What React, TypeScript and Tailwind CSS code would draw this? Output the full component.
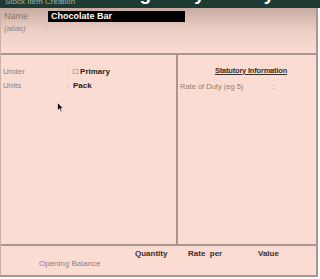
import React from "react";

const Cursor = () => (
  <svg width="7" height="11" viewBox="0 0 7 11" className="absolute left-[56px] top-[47px]">
    <path d="M0.5 0.5 L0.5 8.5 L2.5 6.8 L4 10 L5.2 9.4 L3.8 6.3 L6.2 6.3 Z" fill="#111" stroke="#fff" strokeWidth="0.6" />
  </svg>
);

const App = () => {
  return (
    <div className="w-[320px] h-[279px] bg-white overflow-hidden font-['Liberation_Sans',Arial,sans-serif]">
      {/* title strip */}
      <div className="relative h-[8px] bg-[#1d3b33] overflow-hidden">
        <div className="absolute left-[5px] top-[-3px] text-[8px] leading-[10px] text-[#9fb3ab]">
          Stock Item Creation
        </div>
        <div className="absolute left-[74px] top-[-16px] text-[19px] leading-[20px] font-bold text-white whitespace-nowrap">
          Creating Entry in Tally ERP 9
        </div>
      </div>

      <div className="w-[318px] h-[269px] border-r-2 border-b-2 border-[#a8968f] border-l border-l-[#c9b1a8] bg-[#fadcd2] flex flex-col">
        {/* name block */}
        <div className="h-[47px] border-b-2 border-[#a8968f] bg-gradient-to-b from-[#c7aaa0] via-[#ecd0c5] to-[#fadcd2] pt-[3px]">
          <div className="flex items-center h-[11px]">
            <span className="w-[47px] pl-[3px] text-[9px] text-[#857671]">Name</span>
            <div className="w-[137px] h-[11px] bg-black text-white text-[9px] font-bold leading-[11px] pl-[3px]">
              Chocolate Bar
            </div>
          </div>
          <div className="flex items-center mt-[1px]">
            <span className="w-[44px] pl-[3px] text-[8px] italic text-[#8e7e79]">(alias)</span>
            <span className="text-[8px] text-[#b09d96]">:</span>
          </div>
        </div>

        {/* middle */}
        <div className="flex h-[191px] border-b-2 border-[#a8968f]">
          <div className="relative w-[177px] border-r-2 border-[#a8968f] pt-[10px]">
            <div className="flex items-center h-[14px] text-[8px]">
              <span className="w-[66px] pl-[2px] text-[#8e7e79]">Under</span>
              <span className="w-[6px] text-[#a8968f]">:</span>
              <span className="font-bold text-[#2b2220]">□ Primary</span>
            </div>
            <div className="flex items-center h-[14px] text-[8px]">
              <span className="w-[66px] pl-[2px] text-[#8e7e79]">Units</span>
              <span className="w-[6px] text-[#a8968f]">:</span>
              <span className="font-bold text-[#2b2220]">Pack</span>
            </div>
            <Cursor />
          </div>
          <div className="flex-1 pt-[10px]">
            <div className="text-center text-[7.5px] font-bold underline tracking-[-0.2px] text-[#3a2f2c] h-[14px] pl-[8px]">
              Statutory Information
            </div>
            <div className="flex items-center text-[7.5px] text-[#8e7e79] mt-[2px] pl-[2px]">
              <span className="w-[92px]">Rate of Duty (eg 5)</span>
              <span>:</span>
            </div>
          </div>
        </div>

        {/* opening balance */}
        <div className="h-[29px] pt-[2px]">
          <div className="flex text-[8px] font-bold text-[#3a2f2c] h-[10px]">
            <span className="pl-[134px] w-[187px]">Quantity</span>
            <span className="w-[70px]">Rate&nbsp; per</span>
            <span>Value</span>
          </div>
          <div className="flex text-[8px] text-[#8e7e79]">
            <span className="pl-[38px] w-[123px]">Opening Balance</span>
            <span className="text-[#b09d96]">:</span>
          </div>
        </div>
      </div>
    </div>
  );
};

export default App;
